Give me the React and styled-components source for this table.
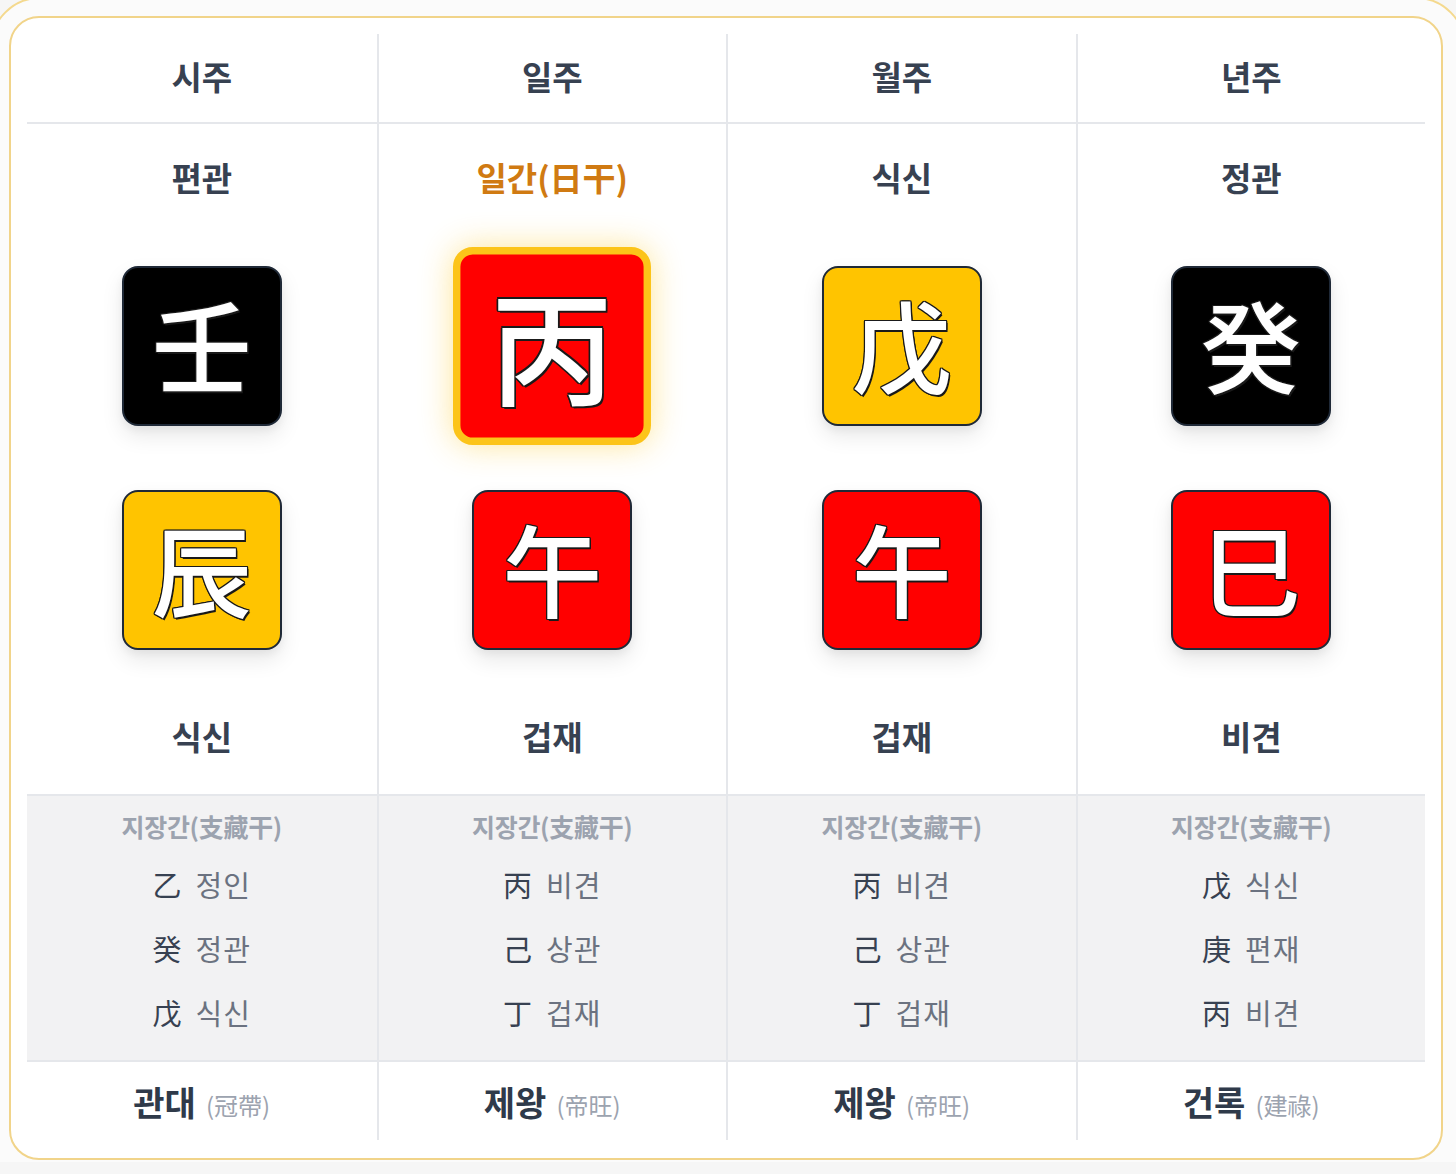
import React from "react";
import styled, { createGlobalStyle, css } from "styled-components";

const GlobalStyle = createGlobalStyle`
  html, body {
    margin: 0;
    padding: 0;
    background: #f6f6f6;
    overflow: hidden;
  }
  body {
    font-family: "Noto Sans CJK KR", "Noto Sans", sans-serif;
  }
`;

const COLORS = {
  black: "#000000",
  yellow: "#ffc400",
  red: "#ff0000",
};

const pillars = [
  {
    title: "시주",
    stemGod: "편관",
    stem: "壬",
    stemColor: "black",
    branch: "辰",
    branchColor: "yellow",
    branchGod: "식신",
    hidden: [
      ["乙", "정인"],
      ["癸", "정관"],
      ["戊", "식신"],
    ],
    stage: "관대",
    stageHan: "冠帶",
  },
  {
    title: "일주",
    stemGod: "일간(日干)",
    dayMaster: true,
    stem: "丙",
    stemColor: "red",
    branch: "午",
    branchColor: "red",
    branchGod: "겁재",
    hidden: [
      ["丙", "비견"],
      ["己", "상관"],
      ["丁", "겁재"],
    ],
    stage: "제왕",
    stageHan: "帝旺",
  },
  {
    title: "월주",
    stemGod: "식신",
    stem: "戊",
    stemColor: "yellow",
    branch: "午",
    branchColor: "red",
    branchGod: "겁재",
    hidden: [
      ["丙", "비견"],
      ["己", "상관"],
      ["丁", "겁재"],
    ],
    stage: "제왕",
    stageHan: "帝旺",
  },
  {
    title: "년주",
    stemGod: "정관",
    stem: "癸",
    stemColor: "black",
    branch: "巳",
    branchColor: "red",
    branchGod: "비견",
    hidden: [
      ["戊", "식신"],
      ["庚", "편재"],
      ["丙", "비견"],
    ],
    stage: "건록",
    stageHan: "建祿",
  },
];

const Frame = styled.div`
  margin: -3px -10px -60px -10px;
  padding: 17px 21px 60px 17px;
  border: 2px solid #f4d98e;
  border-radius: 50px;
  background: #fbfbfb;
`;

const Card = styled.div`
  background: #ffffff;
  border: 2px solid #f1d48a;
  border-radius: 30px;
  padding: 16px 16px 18px;
`;

const Table = styled.div`
  display: grid;
  grid-template-columns: repeat(4, 1fr);
`;

const Column = styled.div`
  display: flex;
  flex-direction: column;
  min-width: 0;
  ${(p) =>
    !p.$first &&
    css`
      border-left: 2px solid #e5e7eb;
    `}
`;

const Header = styled.div`
  height: 84px;
  padding-bottom: 4px;
  display: flex;
  align-items: center;
  justify-content: center;
  border-bottom: 2px solid #e5e7eb;
  font-size: 33px;
  font-weight: 700;
  color: #374151;
`;

const Body = styled.div`
  display: flex;
  flex-direction: column;
  align-items: center;
  padding: 33px 0 38px;
`;

const GodLabel = styled.div`
  height: 40px;
  line-height: 40px;
  font-size: 33px;
  font-weight: 700;
  color: ${(p) => (p.$accent ? "#d07a12" : "#374151")};
`;

const outline = `
  -1px -1px 0 #1a1a1a,
  1px -1px 0 #1a1a1a,
  -1px 1px 0 #1a1a1a,
  1px 1px 0 #1a1a1a,
  0 -1.3px 0 #1a1a1a,
  0 1.3px 0 #1a1a1a,
  -1.3px 0 0 #1a1a1a,
  1.3px 0 0 #1a1a1a,
  1.5px 2px 0 #1a1a1a
`;

const CharBox = styled.div`
  width: 160px;
  height: 160px;
  box-sizing: border-box;
  margin-top: ${(p) => p.$mt}px;
  border-radius: 16px;
  border: 2px solid #1f2937;
  background: ${(p) => COLORS[p.$color]};
  display: flex;
  align-items: center;
  justify-content: center;
  box-shadow: 0 10px 22px rgba(0, 0, 0, 0.09), 0 4px 8px rgba(0, 0, 0, 0.05);
  font-size: 100px;
  font-weight: 500;
  line-height: 1;
  color: #ffffff;
  text-shadow: ${outline};
  ${(p) =>
    p.$day &&
    css`
      transform: scale(1.2375);
      border: 6.5px solid #fcc419;
      border-radius: 16px;
      box-shadow: 0 0 26px rgba(252, 200, 30, 0.45);
    `}
`;

const Glyph = styled.span`
  display: block;
  transform: translateY(-3px);
`;

const BranchGod = styled(GodLabel)`
  margin-top: 66px;
`;

const Hidden = styled.div`
  background: #f2f2f3;
  border-top: 2px solid #e5e7eb;
  border-bottom: 2px solid #e5e7eb;
  height: 268px;
  box-sizing: border-box;
  display: flex;
  flex-direction: column;
  align-items: center;
  padding-top: 12px;
`;

const HiddenTitle = styled.div`
  font-size: 25px;
  font-weight: 700;
  color: #9ca3af;
  line-height: 36px;
  letter-spacing: -0.3px;
  margin-bottom: 8px;
`;

const HiddenRow = styled.div`
  display: flex;
  align-items: center;
  gap: 14px;
  height: 64px;
  font-size: 29px;
`;

const HiddenHan = styled.span`
  color: #374151;
`;

const HiddenGod = styled.span`
  color: #6b7280;
  letter-spacing: 1px;
`;

const Stage = styled.div`
  height: 78px;
  display: flex;
  align-items: center;
  justify-content: center;
  gap: 10px;
`;

const StageName = styled.span`
  font-size: 34px;
  font-weight: 700;
  color: #2f3a4a;
`;

const StageHan = styled.span`
  font-size: 24px;
  color: #9ca3af;
  transform: translateY(3px);
`;

function Pillar({ p, first }) {
  return (
    <Column $first={first}>
      <Header>{p.title}</Header>
      <Body>
        <GodLabel $accent={p.dayMaster}>{p.stemGod}</GodLabel>
        <CharBox $mt={69} $color={p.stemColor} $day={p.dayMaster}>
          <Glyph>{p.stem}</Glyph>
        </CharBox>
        <CharBox $mt={64} $color={p.branchColor}>
          <Glyph>{p.branch}</Glyph>
        </CharBox>
        <BranchGod>{p.branchGod}</BranchGod>
      </Body>
      <Hidden>
        <HiddenTitle>지장간(支藏干)</HiddenTitle>
        {p.hidden.map(([han, god], i) => (
          <HiddenRow key={i}>
            <HiddenHan>{han}</HiddenHan>
            <HiddenGod>{god}</HiddenGod>
          </HiddenRow>
        ))}
      </Hidden>
      <Stage>
        <StageName>{p.stage}</StageName>
        <StageHan>({p.stageHan})</StageHan>
      </Stage>
    </Column>
  );
}

export default function App() {
  return (
    <>
      <GlobalStyle />
      <Frame>
        <Card>
          <Table>
            {pillars.map((p, i) => (
              <Pillar key={p.title} p={p} first={i === 0} />
            ))}
          </Table>
        </Card>
      </Frame>
    </>
  );
}
